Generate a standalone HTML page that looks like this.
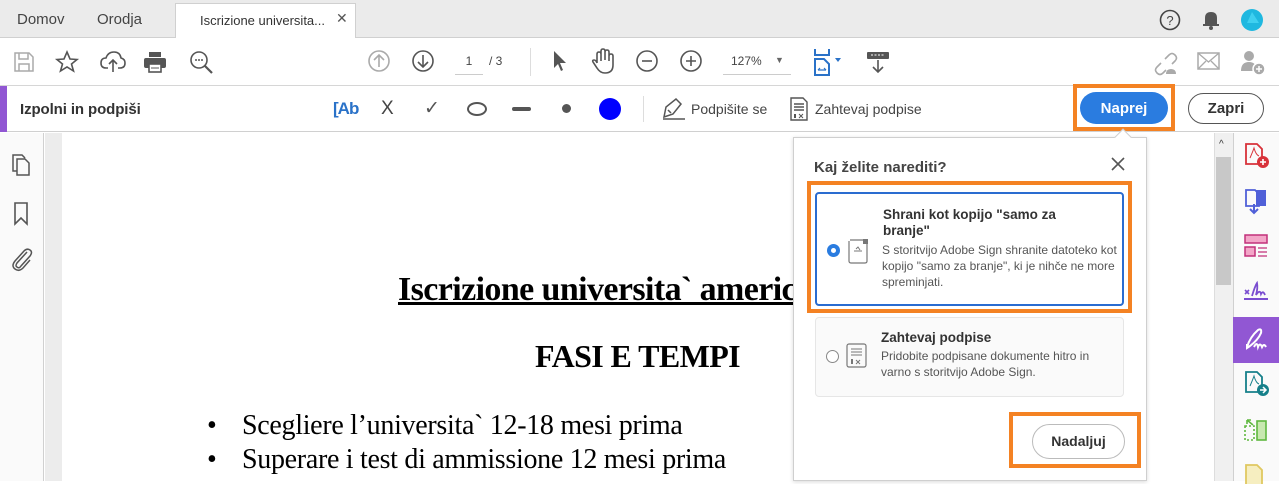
<!DOCTYPE html>
<html><head><meta charset="utf-8"><style>
*{box-sizing:border-box;margin:0;padding:0}
body{width:1279px;height:481px;overflow:hidden;position:relative;font-family:"Liberation Sans",sans-serif;background:#fff;color:#333}
.a{position:absolute}
svg{position:absolute;overflow:visible}
.ic{fill:none;stroke:#555;stroke-width:1.6}
</style></head><body>
<!-- tab bar -->
<div class="a" style="left:0;top:0;width:1279px;height:38px;background:#ebebeb;border-bottom:1px solid #d0d0d0"></div>
<div class="a" style="left:17px;top:11px;font-size:15px;color:#444">Domov</div>
<div class="a" style="left:97px;top:11px;font-size:15px;color:#444">Orodja</div>
<div class="a" style="left:175px;top:3px;width:181px;height:36px;background:#fff;border:1px solid #d0d0d0;border-bottom:none"></div>
<div class="a" style="left:200px;top:13px;font-size:13px;color:#333">Iscrizione universita...</div>
<div class="a" style="left:336px;top:10px;font-size:14px;color:#555">✕</div>
<svg style="left:1159px;top:9px" width="22" height="22"><circle cx="11" cy="11" r="9.5" fill="none" stroke="#444" stroke-width="1.6"/><text x="11" y="16" font-size="13" text-anchor="middle" fill="#444" font-family="Liberation Sans">?</text></svg>
<svg style="left:1201px;top:9px" width="20" height="22"><path d="M4 16 L4 9 Q4 3 10 3 Q16 3 16 9 L16 16 Z" fill="#555"/><rect x="2" y="15" width="16" height="2" fill="#555"/><circle cx="10" cy="19" r="2" fill="#555"/></svg>
<svg style="left:1240px;top:8px" width="24" height="24"><circle cx="12" cy="12" r="11" fill="#1fb8e0"/><path d="M12 4 L19 15 L7 15 Z" fill="#3fd0f0"/></svg>
<!-- toolbar -->
<div class="a" style="left:0;top:38px;width:1279px;height:48px;background:#fff;border-bottom:1px solid #d6d6d6"></div>
<svg style="left:13px;top:51px" width="22" height="22"><path d="M2 2 H16 L20 6 V20 H2 Z M6 2 V8 H15 V2 M6 20 V13 H16 V20" fill="none" stroke="#aaa" stroke-width="1.5"/></svg>
<svg style="left:55px;top:50px" width="24" height="24"><path d="M12 2 L15 9 L22 9.5 L16.5 14 L18.5 21 L12 17 L5.5 21 L7.5 14 L2 9.5 L9 9 Z" class="ic"/></svg>
<svg style="left:100px;top:50px" width="26" height="24"><path d="M8 18 H6 Q1 18 1 13 Q1 8 6 8 Q8 2 14 2 Q20 2 21 8 Q25 9 25 13 Q25 18 20 18 H18 M13 22 V10 M9 14 L13 10 L17 14" class="ic"/></svg>
<svg style="left:143px;top:50px" width="24" height="24"><rect x="6" y="2" width="12" height="5" fill="#555"/><rect x="1" y="8" width="22" height="10" rx="2" fill="#555"/><rect x="6" y="14" width="12" height="8" fill="#fff" stroke="#555" stroke-width="1.6"/><path d="M8 18 H16" stroke="#555"/></svg>
<svg style="left:189px;top:50px" width="26" height="26"><circle cx="10" cy="10" r="8" class="ic"/><path d="M16 16 L23 23" stroke="#555" stroke-width="2.2"/><circle cx="7" cy="10" r="1" fill="#555"/><circle cx="10" cy="10" r="1" fill="#555"/><circle cx="13" cy="10" r="1" fill="#555"/></svg>
<svg style="left:368px;top:50px" width="24" height="24"><circle cx="11" cy="11" r="10" fill="none" stroke="#aaa" stroke-width="1.6"/><path d="M11 17 V6 M6 10 L11 5 L16 10" fill="none" stroke="#aaa" stroke-width="1.6"/></svg>
<svg style="left:412px;top:50px" width="24" height="24"><circle cx="11" cy="11" r="10" class="ic"/><path d="M11 5 V16 M6 12 L11 17 L16 12" class="ic"/></svg>
<div class="a" style="left:455px;top:54px;width:28px;text-align:center;font-size:12px;color:#444">1</div>
<div class="a" style="left:455px;top:74px;width:28px;height:1px;background:#ccc"></div>
<div class="a" style="left:489px;top:54px;font-size:12px;color:#444">/ 3</div>
<div class="a" style="left:530px;top:48px;width:1px;height:28px;background:#ddd"></div>
<svg style="left:552px;top:50px" width="16" height="24"><path d="M2 1 L2 18 L6 14 L9 21 L11 20 L8 13 L14 13 Z" fill="#555"/></svg>
<svg style="left:590px;top:48px" width="26" height="28"><path d="M7 15 V6 Q7 4 9 4 Q11 4 11 6 V13 M11 12 V3 Q11 1 13 1 Q15 1 15 3 V12 M15 12 V4 Q15 2 17 2 Q19 2 19 4 V13 M19 13 V8 Q19 6 21 6 Q23 6 23 8 V17 Q23 25 15 25 Q10 25 7 20 L3 14 Q2 12 4 12 Q6 12 7 15" class="ic"/></svg>
<svg style="left:636px;top:50px" width="24" height="24"><circle cx="11" cy="11" r="10" class="ic"/><path d="M6 11 H16" class="ic"/></svg>
<svg style="left:680px;top:50px" width="24" height="24"><circle cx="11" cy="11" r="10" class="ic"/><path d="M6 11 H16 M11 6 V16" class="ic"/></svg>
<div class="a" style="left:731px;top:54px;font-size:12px;color:#444">127%</div>
<div class="a" style="left:775px;top:55px;font-size:9px;color:#666">▼</div>
<div class="a" style="left:723px;top:74px;width:68px;height:1px;background:#ccc"></div>
<svg style="left:812px;top:48px" width="36" height="28"><path d="M3 1 V7 H17 V1" fill="none" stroke="#2a72c8" stroke-width="2"/><path d="M3 27 V11 H12 L17 16 V27 Z" fill="none" stroke="#2a72c8" stroke-width="2"/><path d="M6 22 H14 M6 22 L8 20 M14 22 L12 20" stroke="#2a72c8" stroke-width="1.2"/><path d="M23 10 L29 10 L26 14 Z" fill="#2a72c8"/></svg>
<svg style="left:866px;top:50px" width="26" height="26"><rect x="1" y="2" width="22" height="7" rx="1" fill="#555"/><path d="M5 5 H19" stroke="#fff" stroke-dasharray="2 1.5"/><path d="M12 10 V22 M7 17 L12 22 L17 17" class="ic"/></svg>
<svg style="left:1152px;top:50px" width="26" height="26"><path d="M9 13 L5 17 Q2 20 5 23 Q8 26 11 23 L14 20 M13 9 L17 5 Q20 2 23 5 Q26 8 23 11 L20 14" fill="none" stroke="#aaa" stroke-width="1.6"/><path d="M14 24 Q14 19 19 19 Q24 19 24 24 Z" fill="#aaa"/></svg>
<svg style="left:1197px;top:52px" width="24" height="20"><rect x="1" y="1" width="21" height="16" fill="none" stroke="#aaa" stroke-width="1.5"/><path d="M1 1 L11.5 10 L22 1 M1 17 L9 9 M22 17 L14 9" fill="none" stroke="#aaa" stroke-width="1.3"/></svg>
<svg style="left:1239px;top:49px" width="28" height="28"><circle cx="10" cy="7" r="5" fill="#aaa"/><path d="M2 22 Q2 13 10 13 Q17 13 17 20 V22 Z" fill="#aaa"/><circle cx="20" cy="20" r="6" fill="#aaa" stroke="#fff" stroke-width="1.5"/><path d="M20 17 V23 M17 20 H23" stroke="#fff" stroke-width="1.5"/></svg>
<!-- fill & sign bar -->
<div class="a" style="left:0;top:86px;width:1279px;height:46px;background:#fff;border-bottom:1px solid #d0d0d0"></div>
<div class="a" style="left:0;top:86px;width:7px;height:46px;background:#9157d3"></div>
<div class="a" style="left:20px;top:101px;font-size:15px;color:#333;font-weight:bold;letter-spacing:-0.1px">Izpolni in podpiši</div>
<div class="a" style="left:333px;top:99px;font-size:17px;color:#2a72c8;font-weight:bold;letter-spacing:-1px">[Ab</div>
<div class="a" style="left:381px;top:98px;font-size:19px;color:#444">X</div>
<div class="a" style="left:424px;top:97px;font-size:19px;color:#555">✓</div>
<div class="a" style="left:467px;top:102px;width:20px;height:14px;border:2px solid #555;border-radius:50%"></div>
<div class="a" style="left:512px;top:107px;width:19px;height:4px;background:#555;border-radius:2px"></div>
<div class="a" style="left:562px;top:104px;width:9px;height:9px;background:#555;border-radius:50%"></div>
<div class="a" style="left:599px;top:98px;width:22px;height:22px;background:#0000ff;border-radius:50%"></div>
<div class="a" style="left:643px;top:96px;width:1px;height:26px;background:#ddd"></div>
<svg style="left:661px;top:97px" width="26" height="24"><path d="M3 20 L5 10 L15 2 L20 7 L12 17 Z M7 13 L10 16 M2 22 H24" fill="none" stroke="#555" stroke-width="1.5"/></svg>
<div class="a" style="left:691px;top:101px;font-size:14px;color:#444">Podpišite se</div>
<svg style="left:790px;top:97px" width="18" height="24"><path d="M1 1 H13 L17 5 V23 H1 Z M4 7 H14 M4 10 H14 M4 13 H14" fill="none" stroke="#555" stroke-width="1.4"/><rect x="4" y="17" width="2" height="4" fill="#555"/><path d="M9 17 L13 21 M13 17 L9 21" stroke="#555"/></svg>
<div class="a" style="left:815px;top:101px;font-size:14px;color:#444">Zahtevaj podpise</div>
<div class="a" style="left:1073px;top:84px;width:102px;height:47px;border:4px solid #f48223"></div>
<div class="a" style="left:1080px;top:92px;width:88px;height:32px;background:#2a7ce0;border-radius:16px;color:#fff;font-weight:bold;font-size:15px;text-align:center;line-height:34px">Naprej</div>
<div class="a" style="left:1188px;top:93px;width:76px;height:31px;border:1.5px solid #555;border-radius:16px;color:#333;font-weight:bold;font-size:15px;text-align:center;line-height:30px">Zapri</div>
<!-- left panel -->
<div class="a" style="left:0;top:133px;width:44px;height:348px;background:#fafafa;border-right:1px solid #d0d0d0"></div>
<svg style="left:11px;top:154px" width="22" height="24"><path d="M6 5 V21 H18 V9 L14 5 Z M6 17 H2 V1 H11 L14 4" fill="none" stroke="#555" stroke-width="1.5"/></svg>
<svg style="left:13px;top:202px" width="16" height="24"><path d="M2 1 H14 V22 L8 16 L2 22 Z" fill="none" stroke="#555" stroke-width="1.6"/></svg>
<svg style="left:10px;top:246px" width="24" height="26"><path d="M17 6 L7 17 Q5 20 7 21 Q9 23 11 20 L20 10 Q23 6 20 4 Q17 2 14 5 L5 15 Q1 20 5 23 Q9 26 13 22 L20 14" fill="none" stroke="#555" stroke-width="1.5"/></svg>
<!-- doc area -->
<div class="a" style="left:45px;top:133px;width:1169px;height:348px;background:#ececec"></div>
<div class="a" style="left:62px;top:133px;width:1152px;height:348px;background:#fff"></div>
<div class="a" style="left:398px;top:271px;font-family:'Liberation Serif',serif;font-weight:bold;font-size:34px;color:#000;text-decoration:underline;white-space:nowrap;letter-spacing:-0.6px">Iscrizione universita` americana</div>
<div class="a" style="left:535px;top:338px;font-family:'Liberation Serif',serif;font-weight:bold;font-size:32px;color:#000;white-space:nowrap;letter-spacing:-0.6px">FASI E TEMPI</div>
<div class="a" style="left:207px;top:409px;font-family:'Liberation Serif',serif;font-size:28px;color:#000;white-space:nowrap;line-height:34px">•</div>
<div class="a" style="left:207px;top:443px;font-family:'Liberation Serif',serif;font-size:28px;color:#000;white-space:nowrap;line-height:34px">•</div>
<div class="a" style="left:242px;top:409px;font-family:'Liberation Serif',serif;font-size:28px;color:#000;white-space:nowrap;line-height:34px;letter-spacing:-0.3px">Scegliere l’universita` 12-18 mesi prima<br>Superare i test di ammissione 12 mesi prima</div>
<!-- scrollbar -->
<div class="a" style="left:1214px;top:133px;width:19px;height:348px;background:#f0f0f0;border-left:1px solid #ddd"></div>
<div class="a" style="left:1219px;top:139px;font-size:10px;color:#333">^</div>
<div class="a" style="left:1216px;top:157px;width:15px;height:128px;background:#c8c8c8"></div>
<!-- right panel -->
<div class="a" style="left:1233px;top:133px;width:46px;height:348px;background:#fafafa;border-left:1px solid #d0d0d0"></div>
<svg style="left:1244px;top:143px" width="26" height="26"><path d="M2 1 H13 L18 6 V21 H2 Z" fill="none" stroke="#d8323a" stroke-width="1.8"/><path d="M6 15 Q9 8 10 5 Q12 12 15 13" fill="none" stroke="#d8323a"/><circle cx="19" cy="19" r="6" fill="#d8323a"/><path d="M19 16 V22 M16 19 H22" stroke="#fff" stroke-width="1.6"/></svg>
<svg style="left:1244px;top:188px" width="26" height="28"><path d="M2 2 H11 L15 6 V18 H2 Z" fill="none" stroke="#5060d8" stroke-width="1.8"/><path d="M12 2 H22 V18 H12 Z" fill="#5060d8"/><path d="M10 16 V25 M6 21 L10 25 L14 21" stroke="#5060d8" stroke-width="2" fill="none"/></svg>
<svg style="left:1244px;top:234px" width="26" height="26"><rect x="1" y="1" width="22" height="8" fill="#f3a6c8" stroke="#c2307a" stroke-width="1.5"/><rect x="1" y="13" width="10" height="9" fill="#f3a6c8" stroke="#c2307a" stroke-width="1.5"/><path d="M14 14 H23 M14 18 H23 M14 22 H23" stroke="#c2307a" stroke-width="1.3"/></svg>
<svg style="left:1244px;top:280px" width="26" height="24"><path d="M1 10 L5 14 M5 10 L1 14" stroke="#7a4dd0" stroke-width="1.6"/><path d="M8 16 Q11 6 13 3 Q14 8 12 15 Q16 9 17 14 Q19 10 21 15" fill="none" stroke="#7a4dd0" stroke-width="1.8"/><path d="M0 19 H24" stroke="#7a4dd0" stroke-width="2"/></svg>
<div class="a" style="left:1233px;top:317px;width:46px;height:46px;background:#9157d3"></div>
<svg style="left:1244px;top:327px" width="26" height="26"><path d="M3 20 Q6 10 14 3 Q18 1 17 6 Q14 13 6 19 M6 19 L3 21 L3 17 M10 20 Q13 14 14 20 Q16 15 18 20 Q20 16 22 20" fill="none" stroke="#fff" stroke-width="2"/></svg>
<svg style="left:1244px;top:371px" width="26" height="26"><path d="M2 1 H13 L18 6 V21 H2 Z" fill="none" stroke="#16808a" stroke-width="1.8"/><path d="M6 15 Q9 8 10 5 Q12 12 15 13" fill="none" stroke="#16808a"/><circle cx="19" cy="19" r="6" fill="#16808a"/><path d="M16 19 H22 M19 16 L22 19 L19 22" stroke="#fff" stroke-width="1.5" fill="none"/></svg>
<svg style="left:1244px;top:418px" width="26" height="26"><path d="M1 8 V22 H10 V8 Z" fill="none" stroke="#60b840" stroke-width="1.6" stroke-dasharray="2 2"/><rect x="13" y="3" width="9" height="19" fill="#c8e8b0" stroke="#60b840" stroke-width="1.6"/><path d="M3 2 L9 7 M3 2 V6 M3 2 H7" stroke="#60b840" stroke-width="1.6" fill="none"/></svg>
<svg style="left:1244px;top:464px" width="26" height="20"><path d="M2 1 H13 L18 6 V21 H2 Z" fill="#f6eec0" stroke="#e0c860" stroke-width="1.8"/></svg>
<!-- popup -->
<div class="a" style="left:793px;top:137px;width:354px;height:344px;background:#fff;border:1px solid #cfcfcf;box-shadow:0 1px 4px rgba(0,0,0,.15)"></div>
<div class="a" style="left:1117px;top:131px;width:12px;height:12px;background:#fff;border-left:1px solid #cfcfcf;border-top:1px solid #cfcfcf;transform:rotate(45deg)"></div>
<div class="a" style="left:814px;top:159px;font-size:15px;font-weight:bold;color:#444">Kaj želite narediti?</div>
<svg style="left:1111px;top:157px" width="14" height="14"><path d="M1 1 L13 13 M13 1 L1 13" stroke="#555" stroke-width="1.6"/></svg>
<div class="a" style="left:807px;top:181px;width:325px;height:132px;border:4px solid #f48223"></div>
<div class="a" style="left:815px;top:192px;width:309px;height:114px;border:2px solid #2a6cd0;border-radius:4px;background:#fff"></div>
<div class="a" style="left:827px;top:244px;width:13px;height:13px;border-radius:50%;background:#2a7ce0"></div>
<div class="a" style="left:831px;top:248px;width:5px;height:5px;border-radius:50%;background:#fff"></div>
<svg style="left:848px;top:237px" width="22" height="28"><path d="M2 3 H15 M19 7 V24 Q19 26 17 26 H3 Q1 26 1 24 V4" fill="none" stroke="#777" stroke-width="1.2"/><rect x="15" y="2" width="5" height="5" fill="#777"/><path d="M6 14 H14 M8 12 L10 10 L12 13" stroke="#777" fill="none"/></svg>
<div class="a" style="left:883px;top:207px;font-size:13.5px;font-weight:bold;color:#333;line-height:16px;width:200px">Shrani kot kopijo "samo za branje"</div>
<div class="a" style="left:882px;top:242px;font-size:12px;color:#555;line-height:16px;width:236px">S storitvijo Adobe Sign shranite datoteko kot kopijo "samo za branje", ki je nihče ne more spreminjati.</div>
<div class="a" style="left:815px;top:317px;width:309px;height:80px;border:1px solid #e6e6e6;border-radius:4px;background:#fafafa"></div>
<div class="a" style="left:826px;top:350px;width:13px;height:13px;border-radius:50%;border:1.5px solid #888;background:#fff"></div>
<svg style="left:846px;top:343px" width="22" height="26"><rect x="1" y="1" width="19" height="23" rx="2" fill="none" stroke="#777" stroke-width="1.2"/><path d="M5 6 H16 M5 9 H16 M5 12 H16" stroke="#777"/><rect x="5" y="16" width="2" height="5" fill="#777"/><path d="M10 17 L14 21 M14 17 L10 21" stroke="#777"/></svg>
<div class="a" style="left:881px;top:330px;font-size:13.5px;font-weight:bold;color:#333">Zahtevaj podpise</div>
<div class="a" style="left:881px;top:348px;font-size:12px;color:#555;line-height:16px;width:225px">Pridobite podpisane dokumente hitro in varno s storitvijo Adobe Sign.</div>
<div class="a" style="left:1009px;top:412px;width:132px;height:56px;border:4px solid #f48223"></div>
<div class="a" style="left:1032px;top:424px;width:93px;height:35px;border:1.5px solid #bbb;border-radius:18px;background:#fff;font-size:14px;font-weight:bold;color:#333;text-align:center;line-height:32px">Nadaljuj</div>
</body></html>
